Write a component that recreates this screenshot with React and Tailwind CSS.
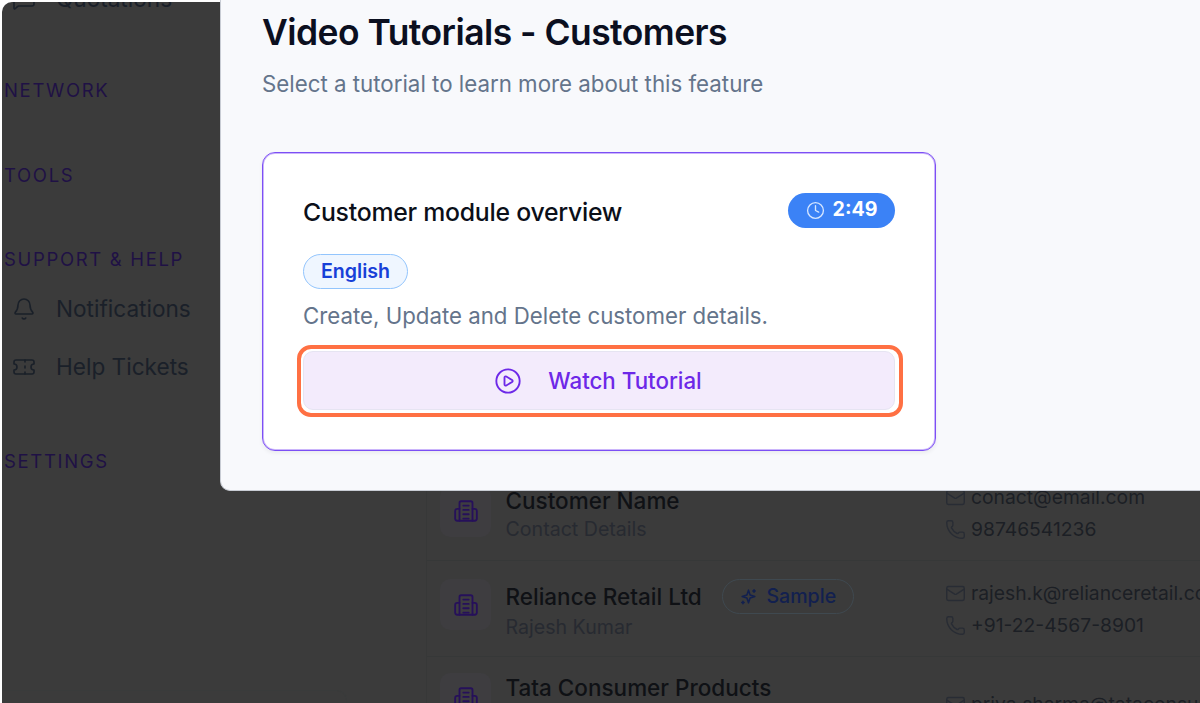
import React from 'react';
import { Bell, Ticket, Mail, Phone, Clock, CirclePlay, MessageSquare } from 'lucide-react';

const customers = [
  { name: 'Customer Name', contact: 'Contact Details', email: 'conact@email.com', phone: '98746541236', height: 'h-[96px] pt-[2px]' },
  { name: 'Reliance Retail Ltd', contact: 'Rajesh Kumar', email: 'rajesh.k@relianceretail.com', phone: '+91-22-4567-8901', sample: 'inline', height: 'h-[96px] pt-[2px]' },
  { name: 'Tata Consumer Products', contact: 'Priya Sharma', email: 'priya.sharma@tataconsumer.com', phone: '+91-22-6665-8282', sample: 'below', height: 'h-[128px]' },
];

function BuildingIcon() {
  return (
    <svg width="26" height="26" viewBox="0 0 24 24" fill="none" stroke="currentColor" strokeWidth="1.7" strokeLinecap="round" strokeLinejoin="round">
      <path d="M6 21V4.5A1.5 1.5 0 0 1 7.5 3h9A1.5 1.5 0 0 1 18 4.5V21" />
      <path d="M6 10H4a2 2 0 0 0-2 2v7a2 2 0 0 0 2 2h16a2 2 0 0 0 2-2v-7a2 2 0 0 0-2-2h-2" />
      <path d="M9.5 7h5M9.5 11h5M9.5 15h5M9.5 19h5" />
    </svg>
  );
}

function SparkIcon() {
  return (
    <svg width="19" height="19" viewBox="0 0 24 24" fill="none" stroke="currentColor" strokeWidth="2" strokeLinecap="round" strokeLinejoin="round" className="mr-[8px]">
      <path d="M12 4l2 6 6 2-6 2-2 6-2-6-6-2 6-2z" />
      <path d="M19 3.5v3M17.5 5h3M5 18v3M3.5 19.5h3" />
    </svg>
  );
}

function SectionLabel({ children, className }) {
  return (
    <div className={`text-[18.5px] leading-[24px] tracking-[0.09em] text-[#1f1145] ${className}`}>
      {children}
    </div>
  );
}

function NavItem({ icon: Icon, label, className }) {
  return (
    <div className={`flex items-center h-[28px] pl-[10px] text-[#1a2029] ${className}`}>
      <Icon size={24} strokeWidth={1.6} className="shrink-0" />
      <span className="ml-[20px] text-[22.6px]">{label}</span>
    </div>
  );
}

function SamplePill({ className }) {
  return (
    <span className={`flex items-center h-[35px] w-[132px] justify-center rounded-full border border-[#3f4950] text-[#12204f] text-[19.6px] font-medium shrink-0 ${className}`}>
      <SparkIcon />
      Sample
    </span>
  );
}

function CustomerRow({ customer }) {
  return (
    <div className={`flex items-center ${customer.height} pl-[13px] border-b border-[#363838] shrink-0`}>
      <div className="flex w-[505px] items-start shrink-0">
        <div className="w-[51px] h-[51px] rounded-[10px] bg-[#3e3d40] flex items-center justify-center shrink-0 text-[#26105a]">
          <BuildingIcon />
        </div>
        <div className="ml-[14.5px]">
          <div className="flex items-center">
            <span className="text-[22.5px] leading-[30px] font-medium text-[#0f1115] whitespace-nowrap">{customer.name}</span>
            {customer.sample === 'inline' && <SamplePill className="ml-[20px]" />}
          </div>
          {customer.sample === 'below' && <SamplePill className="mt-[5px]" />}
          <div className="text-[19.6px] leading-[26px] text-[#272a31]">{customer.contact}</div>
        </div>
      </div>
      <div className="text-[19.3px] text-[#1c1f25] whitespace-nowrap">
        <div className="flex items-center h-[32px]">
          <Mail size={21} strokeWidth={1.6} className="text-[#282c34] mr-[5px] shrink-0" />
          {customer.email}
        </div>
        <div className="flex items-center h-[32px]">
          <Phone size={21} strokeWidth={1.6} className="text-[#282c34] mr-[5px] shrink-0" />
          {customer.phone}
        </div>
      </div>
    </div>
  );
}

function TutorialCard() {
  return (
    <div className="w-[674px] h-[299px] bg-white border border-[#7c4ff5] rounded-[13px] px-[40px] pt-[39px] shadow-[inset_0_0_0_1px_rgba(139,92,246,0.45),0_2px_4px_rgba(0,0,0,0.06)]">
      <div className="flex items-center justify-between h-[36px]">
        <h3 className="mt-[5px] text-[24.8px] font-[550] text-[#0b0f19] tracking-[-0.01em]">Customer module overview</h3>
        <span className="flex items-center h-[35px] w-[107px] justify-center rounded-full bg-[#3b82f6] text-white text-[19.6px] font-bold">
          <Clock size={19} strokeWidth={1.7} className="mr-[8px] text-[#d6e6ff]" />
          2:49
        </span>
      </div>
      <span className="inline-flex items-center justify-center h-[35px] w-[105px] mt-[26px] rounded-full bg-[#eff6ff] border border-[#93c5fd] text-[#1740d8] text-[19.6px] font-semibold">
        English
      </span>
      <p className="mt-[10px] text-[22.25px] leading-[34px] text-[#64748b]">Create, Update and Delete customer details.</p>
      <button className="relative mt-[18px] w-full h-[59px] pr-[2px] rounded-[10px] bg-[#f3ebfc] border border-[#e6e4f2] flex items-center justify-center text-[#6d28e8] text-[22.3px] font-medium">
        <CirclePlay size={28} strokeWidth={1.6} className="mr-[26px]" />
        Watch Tutorial
        <span className="absolute -left-[7px] -right-[9px] -top-[7px] -bottom-[8px] border-4 border-[#ff7043] rounded-[14px]" />
      </button>
    </div>
  );
}

export default function App() {
  return (
    <div className="relative w-[1200px] h-[703px] overflow-hidden bg-white pl-[2px] pt-[2px] font-['Inter',sans-serif]">
      <div className="flex h-full bg-[#3b3b3b] rounded-tl-[10px] overflow-hidden">
        <aside className="w-[425px] h-[701px] shrink-0 border-r border-[#373838] flex flex-col overflow-hidden">
          <NavItem icon={MessageSquare} label="Quotations" className="-mt-[17px]" />
          <SectionLabel className="mt-[65px] pl-[2px]">NETWORK</SectionLabel>
          <SectionLabel className="mt-[61px] pl-[2px]">TOOLS</SectionLabel>
          <SectionLabel className="mt-[60px] pl-[2px]">SUPPORT &amp; HELP</SectionLabel>
          <NavItem icon={Bell} label="Notifications" className="mt-[24px]" />
          <NavItem icon={Ticket} label="Help Tickets" className="mt-[30px]" />
          <SectionLabel className="mt-[68px] pl-[2px]">SETTINGS</SectionLabel>
          <div className="mt-auto h-[13px] w-[345px] shrink-0 border-t border-r border-[#393b3b] rounded-tr-[10px]" />
        </aside>
        <main className="flex-1 min-w-0 overflow-hidden flex flex-col pt-[463px]">
          {customers.map((c) => <CustomerRow key={c.name} customer={c} />)}
        </main>
      </div>

      {/* modal */}
      <div className="absolute left-[220px] top-0 w-[980px] h-[491px] bg-[#f8f9fc] rounded-bl-[10px] border-l border-b border-[#c8ccd4] pl-[41px] pt-[12px]">
        <h2 className="text-[35.45px] leading-[42px] font-semibold text-[#0b0f1f] tracking-[-0.015em]">Video Tutorials - Customers</h2>
        <p className="mt-[15px] text-[22.3px] leading-[30px] text-[#64748b]">Select a tutorial to learn more about this feature</p>
        <div className="mt-[53px]">
          <TutorialCard />
        </div>
      </div>
    </div>
  );
}
